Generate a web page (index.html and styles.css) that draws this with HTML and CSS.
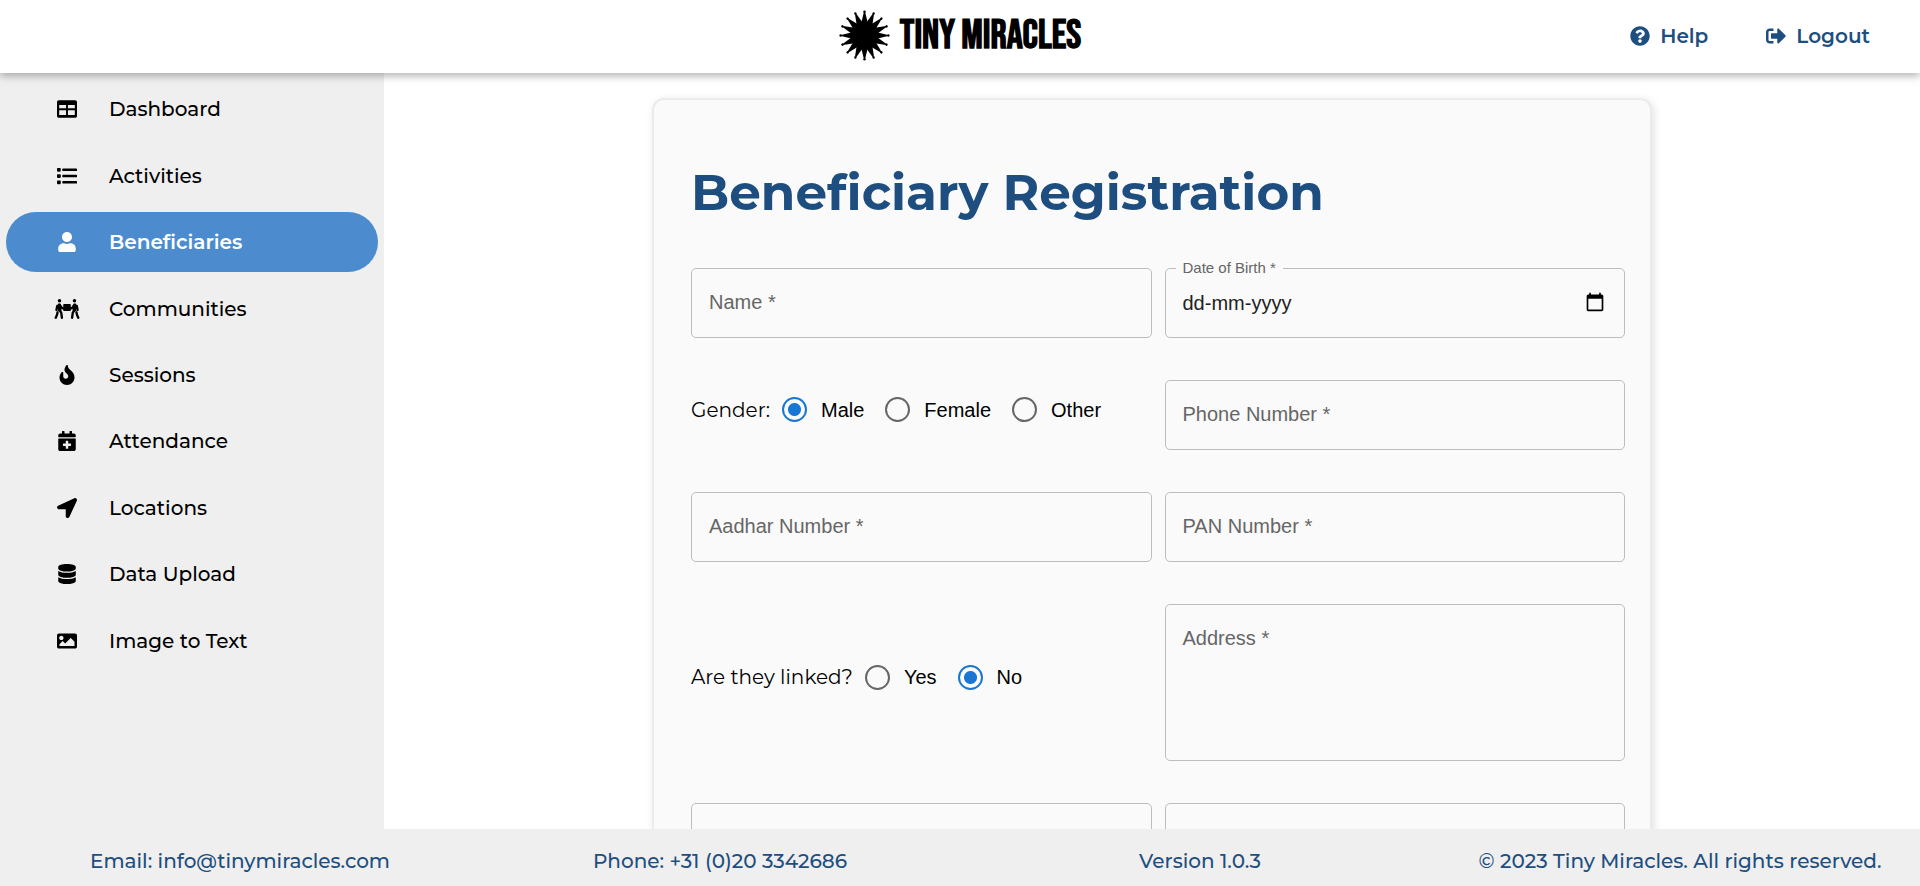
FILE: index.html
```html
<!DOCTYPE html>
<html lang="en">
<head>
<meta charset="utf-8">
<meta name="viewport" content="width=device-width, initial-scale=1">
<title>Tiny Miracles - Beneficiary Registration</title>
<link rel="stylesheet" href="styles.css">
</head>
<body>
<header class="topbar">
  <a class="brand" href="#">
    <svg class="brand-mark" viewBox="-25 -25 50 50" aria-hidden="true">
      <defs>
        <g id="ray"><path d="M-4 -9L-0.6 -23H0.6L4 -9z"/><circle cy="-23.4" r="1.2"/></g>
        <g id="quarter"><use href="#ray"/><use href="#ray" transform="rotate(22.5)"/><use href="#ray" transform="rotate(45)"/><use href="#ray" transform="rotate(67.5)"/></g>
      </defs>
      <circle r="12"/>
      <use href="#quarter"/><use href="#quarter" transform="rotate(90)"/><use href="#quarter" transform="rotate(180)"/><use href="#quarter" transform="rotate(270)"/>
    </svg>
    <span class="brand-name">TINY MIRACLES</span>
  </a>
  <nav class="account" aria-label="Account">
    <a class="account-link" href="#">
      <svg class="account-icon" viewBox="0 0 512 512" aria-hidden="true"><path d="M504 256c0 136.997-111.043 248-248 248S8 392.997 8 256C8 119.083 119.043 8 256 8s248 111.083 248 248zM262.655 90c-54.497 0-89.255 22.957-116.549 63.758-3.536 5.286-2.353 12.415 2.715 16.258l34.699 26.31c5.205 3.947 12.621 3.008 16.665-2.122 17.864-22.658 30.113-35.797 57.303-35.797 20.429 0 45.698 13.148 45.698 32.958 0 14.976-12.363 22.667-32.534 33.976C247.128 238.528 216 254.941 216 296v4c0 6.627 5.373 12 12 12h56c6.627 0 12-5.373 12-12v-1.333c0-28.462 83.186-29.647 83.186-106.667 0-58.002-60.165-102-116.531-102zM256 338c-25.365 0-46 20.635-46 46 0 25.364 20.635 46 46 46s46-20.636 46-46c0-25.365-20.635-46-46-46z"/></svg>
      <span>Help</span>
    </a>
    <a class="account-link" href="#">
      <svg class="account-icon" viewBox="0 0 512 512" aria-hidden="true"><path d="M497 273L329 441c-15 15-41 4.500-41-17v-96H152c-13.300 0-24-10.700-24-24v-96c0-13.300 10.700-24 24-24h136V88c0-21.400 25.900-32 41-17l168 168c9.300 9.400 9.300 24.600 0 34zM192 436v-40c0-6.600-5.400-12-12-12H96c-17.700 0-32-14.300-32-32V160c0-17.700 14.300-32 32-32h84c6.600 0 12-5.400 12-12V76c0-6.600-5.400-12-12-12H96c-53 0-96 43-96 96v192c0 53 43 96 96 96h84c6.600 0 12-5.400 12-12z"/></svg>
      <span>Logout</span>
    </a>
  </nav>
</header>

<div class="body">
  <nav class="sidebar" aria-label="Main">
    <a class="side-link" href="#"><svg class="side-icon" viewBox="0 0 512 512" aria-hidden="true"><path fill-rule="evenodd" d="M48 32H464c26 0 48 22 48 48V432c0 26-22 48-48 48H48c-26 0-48-22-48-48V80C0 54 22 32 48 32zM56 152v84H232v-84zM280 152v84H456v-84zM56 288v120H232V288zM280 288v120H456V288z"/></svg><span>Dashboard</span></a>
    <a class="side-link" href="#"><svg class="side-icon" viewBox="0 0 512 512" aria-hidden="true"><rect y="48" width="96" height="96" rx="20"/><rect y="208" width="96" height="96" rx="20"/><rect y="368" width="96" height="96" rx="20"/><rect x="136" y="64" width="376" height="64" rx="16"/><rect x="136" y="224" width="376" height="64" rx="16"/><rect x="136" y="384" width="376" height="64" rx="16"/></svg><span>Activities</span></a>
    <a class="side-link side-link-active" href="#" aria-current="page"><svg class="side-icon" viewBox="-32 0 512 512" aria-hidden="true"><path d="M224 256c70.700 0 128-57.300 128-128S294.700 0 224 0 96 57.300 96 128s57.300 128 128 128zm89.600 32h-16.700c-22.200 10.200-46.900 16-72.900 16s-50.600-5.800-72.900-16h-16.700C60.200 288 0 348.200 0 422.400V464c0 26.500 21.500 48 48 48h352c26.500 0 48-21.500 48-48v-41.600c0-74.200-60.200-134.400-134.400-134.400z"/></svg><span>Beneficiaries</span></a>
    <a class="side-link" href="#"><svg class="side-icon" viewBox="0 0 640 512" aria-hidden="true"><circle cx="128" cy="46" r="46"/><circle cx="512" cy="46" r="46"/><rect x="224" y="128" width="192" height="176" rx="16"/><path class="limb" d="M112 150L128 290L172 350L190 480M128 150L190 230L250 250M70 180L50 280M78 340L66 400L32 480M528 150L512 290L468 350L450 480M512 150L450 230L390 250M570 180L590 280M562 340L574 400L608 480"/><path d="M84 120H154L180 170L176 320L90 310zM556 120H486L460 170L464 320L550 310z"/></svg><span>Communities</span></a>
    <a class="side-link" href="#"><svg class="side-icon" viewBox="-64 0 512 512" aria-hidden="true"><path d="M216 23.860c0-23.800-30.650-32.770-44.150-13.040C48 191.850 224 200 224 288c0 35.630-29.110 64.460-64.850 63.990-35.170-.45-63.150-29.770-63.150-64.940v-85.510c0-21.700-26.470-32.230-41.430-16.500C27.800 213.160 0 261.330 0 320c0 105.870 86.130 192 192 192s192-86.130 192-192c0-170.290-168-193-168-296.140z"/></svg><span>Sessions</span></a>
    <a class="side-link" href="#"><svg class="side-icon" viewBox="-32 0 512 512" aria-hidden="true"><path d="M436 160H12c-6.600 0-12-5.400-12-12v-36c0-26.500 21.500-48 48-48h48V12c0-6.600 5.400-12 12-12h40c6.600 0 12 5.400 12 12v52h128V12c0-6.600 5.400-12 12-12h40c6.600 0 12 5.400 12 12v52h48c26.500 0 48 21.500 48 48v36c0 6.600-5.400 12-12 12zM12 192h424c6.600 0 12 5.400 12 12v260c0 26.500-21.500 48-48 48H48c-26.500 0-48-21.500-48-48V204c0-6.600 5.400-12 12-12zm316 140c0-6.600-5.400-12-12-12h-60v-60c0-6.600-5.400-12-12-12h-40c-6.600 0-12 5.400-12 12v60h-60c-6.600 0-12 5.400-12 12v40c0 6.600 5.400 12 12 12h60v60c0 6.600 5.400 12 12 12h40c6.600 0 12-5.400 12-12v-60h60c6.600 0 12-5.400 12-12v-40z"/></svg><span>Attendance</span></a>
    <a class="side-link" href="#"><svg class="side-icon" viewBox="0 0 512 512" aria-hidden="true"><path d="M444.520 3.520L28.740 195.420c-47.970 22.390-31.980 92.750 19.190 92.750h175.910v175.910c0 51.170 70.360 67.170 92.750 19.190l191.900-415.780c15.990-38.390-25.590-79.970-63.970-63.970z"/></svg><span>Locations</span></a>
    <a class="side-link" href="#"><svg class="side-icon" viewBox="-32 0 512 512" aria-hidden="true"><path d="M448 73.143v45.714C448 159.143 347.667 192 224 192S0 159.143 0 118.857V73.143C0 32.857 100.333 0 224 0s224 32.857 224 73.143zM448 176v102.857C448 319.143 347.667 352 224 352S0 319.143 0 278.857V176c48.125 33.143 136.208 48.572 224 48.572S399.874 209.143 448 176zm0 160v102.857C448 479.143 347.667 512 224 512S0 479.143 0 438.857V336c48.125 33.143 136.208 48.572 224 48.572S399.874 369.143 448 336z"/></svg><span>Data Upload</span></a>
    <a class="side-link" href="#"><svg class="side-icon" viewBox="0 0 512 512" aria-hidden="true"><path d="M464 448H48c-26.510 0-48-21.490-48-48V112c0-26.510 21.490-48 48-48h416c26.510 0 48 21.490 48 48v288c0 26.510-21.490 48-48 48zM112 120c-30.928 0-56 25.072-56 56s25.072 56 56 56 56-25.072 56-56-25.072-56-56-56zM64 384h384V272l-87.515-87.515c-4.686-4.686-12.284-4.686-16.971 0L208 320l-55.515-55.515c-4.686-4.686-12.284-4.686-16.971 0L64 336v48z"/></svg><span>Image to Text</span></a>
  </nav>

  <main class="content">
    <form class="card">
      <h1 class="title">Beneficiary Registration</h1>
      <div class="fields">
        <div class="field">
          <input class="control" id="name" type="text">
          <label class="field-label" for="name">Name *</label>
        </div>
        <div class="field">
          <input class="control" id="dob" type="text" value="dd-mm-yyyy">
          <label class="field-label field-label-raised" for="dob">Date of Birth *</label>
          <button class="picker" type="button" aria-label="Open calendar"><svg class="picker-icon" viewBox="0 0 24 24" aria-hidden="true"><path d="M20 3h-1V1h-2v2H7V1H5v2H4c-1.100 0-2 .9-2 2v16c0 1.100.9 2 2 2h16c1.100 0 2-.9 2-2V5c0-1.100-.9-2-2-2zm0 18H4V8h16v13z"/></svg></button>
        </div>
        <div class="choice" role="radiogroup" aria-labelledby="gender-label">
          <span class="choice-label" id="gender-label">Gender:</span>
          <label class="option"><input class="radio" type="radio" name="gender" checked>Male</label>
          <label class="option"><input class="radio" type="radio" name="gender">Female</label>
          <label class="option"><input class="radio" type="radio" name="gender">Other</label>
        </div>
        <div class="field">
          <input class="control" id="phone" type="tel">
          <label class="field-label" for="phone">Phone Number *</label>
        </div>
        <div class="field">
          <input class="control" id="aadhar" type="text">
          <label class="field-label" for="aadhar">Aadhar Number *</label>
        </div>
        <div class="field">
          <input class="control" id="pan" type="text">
          <label class="field-label" for="pan">PAN Number *</label>
        </div>
        <div class="choice" role="radiogroup" aria-labelledby="linked-label">
          <span class="choice-label" id="linked-label">Are they linked?</span>
          <label class="option"><input class="radio" type="radio" name="linked">Yes</label>
          <label class="option"><input class="radio" type="radio" name="linked" checked>No</label>
        </div>
        <div class="field">
          <textarea class="control control-tall" id="address"></textarea>
          <label class="field-label" for="address">Address *</label>
        </div>
        <div class="field"><input class="control" type="text"></div>
        <div class="field"><input class="control" type="text"></div>
      </div>
    </form>
  </main>
</div>

<footer class="footer">
  <span>Email: info@tinymiracles.com</span>
  <span>Phone: +31 (0)20 3342686</span>
  <span>Version 1.0.3</span>
  <span>© 2023 Tiny Miracles. All rights reserved.</span>
</footer>
</body>
</html>
```
FILE: styles.css
```css
* { box-sizing: border-box; }

body {
  margin: 0;
  height: 100vh;
  display: flex;
  flex-direction: column;
  overflow: hidden;
  background: #fff;
  color: #000;
  font-family: Montserrat, Inter, sans-serif;
  font-size: 20px;
  line-height: 24px;
}

a { color: inherit; text-decoration: none; }
svg { display: block; fill: currentColor; }

.topbar {
  position: relative;
  z-index: 1;
  flex: none;
  display: grid;
  grid-template-columns: 1fr auto 1fr;
  align-items: center;
  padding: 10px 50px 12px;
  background: #fff;
  box-shadow: 0 3px 8px rgba(0, 0, 0, 0.3);
}
.brand {
  grid-column: 2;
  display: flex;
  align-items: center;
  gap: 10px;
}
.brand-mark { width: 51px; height: 51px; }
.brand-name {
  font-family: "Bebas Neue", "Liberation Sans", sans-serif;
  font-size: 40px;
  font-weight: 700;
  line-height: 48px;
  white-space: nowrap;
}
.account {
  display: flex;
  justify-content: flex-end;
  gap: 58px;
  color: #1e4e7f;
  font-weight: 600;
}
.account-link { display: flex; align-items: center; gap: 10px; }
.account-icon { width: 20px; height: 20px; }

.body { flex: 1; min-height: 0; display: flex; }

.sidebar {
  flex: none;
  width: 20%;
  display: grid;
  grid-auto-rows: minmax(60px, 7.5vh);
  align-content: start;
  align-items: center;
  padding: 3px 6px;
  background: #efefef;
  font-weight: 500;
}
.side-link {
  display: flex;
  align-items: center;
  gap: 29px;
  height: 60px;
  padding: 0 48px;
  border-radius: 30px;
}
.side-link-active { background: #4c8cce; color: #fff; font-weight: 600; }
.side-icon { width: 26px; height: 20px; }
.limb {
  fill: none;
  stroke: currentColor;
  stroke-width: 60px;
  stroke-linecap: round;
  stroke-linejoin: round;
}

.content { flex: 1; min-width: 0; padding: 25px 16px; overflow: hidden; }
.card {
  max-width: 1000px;
  margin: 0 auto;
  padding: 63px 25px 37px 37px;
  border: 2px solid #ebebeb;
  border-radius: 12px;
  background: #fafafa;
  box-shadow: 2px 2px 8px rgba(0, 0, 0, 0.12);
}
.title {
  margin: 0 0 45px;
  color: #1e4e7f;
  font-size: 50px;
  font-weight: 700;
  line-height: 60px;
}
.fields {
  display: grid;
  grid-template-columns: 1fr 1fr;
  gap: 42px 13px;
}
.field { position: relative; display: flex; }
.control {
  width: 100%;
  height: 70px;
  padding: 0 17px;
  border: 1px solid #bdbdbd;
  border-radius: 5px;
  background: transparent;
  color: #222;
  font: 20px "Liberation Sans", Arial, sans-serif;
}
.control-tall { height: 157px; padding: 23px 17px; resize: none; }
.field-label {
  position: absolute;
  top: 22px;
  left: 18px;
  color: #666;
  font-family: "Liberation Sans", Arial, sans-serif;
  pointer-events: none;
}
.field-label-raised {
  top: -10px;
  left: 11px;
  padding: 0 7px;
  background: #fafafa;
  font-size: 15px;
  line-height: 20px;
}
.picker {
  position: absolute;
  top: 24px;
  right: 19px;
  padding: 0;
  border: 0;
  background: none;
  color: #000;
}
.picker-icon { width: 22px; height: 20px; }

.choice {
  display: flex;
  align-items: center;
  padding-bottom: 11px;
  gap: 21px;
}
.choice-label { margin-right: -9px; }
.option {
  display: flex;
  align-items: center;
  gap: 14px;
  font-family: "Liberation Sans", Arial, sans-serif;
}
.radio {
  appearance: none;
  width: 25px;
  height: 25px;
  margin: 0;
  border: 2px solid #666;
  border-radius: 50%;
}
.radio:checked {
  border-color: #1976d2;
  background: radial-gradient(circle, #1976d2 6px, transparent 7px);
}

.footer {
  flex: none;
  display: grid;
  grid-template-columns: repeat(4, 1fr);
  justify-items: center;
  padding: 20px 0 13px;
  background: #efefef;
  color: #1e4e7f;
  font-weight: 500;
  white-space: nowrap;
}
```
